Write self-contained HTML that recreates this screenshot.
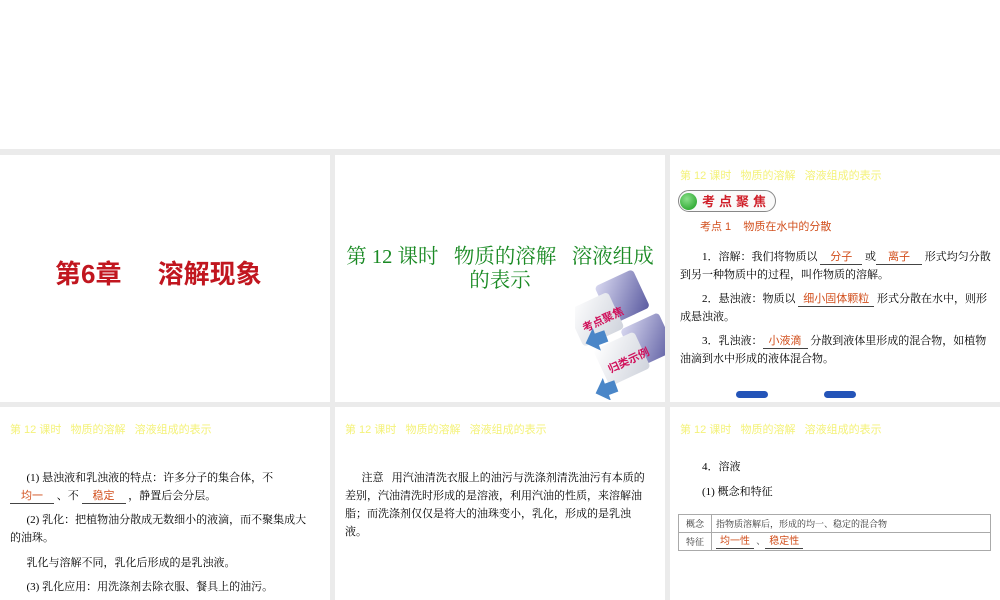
<!DOCTYPE html>
<html><head><meta charset="utf-8"><style>
*{margin:0;padding:0;box-sizing:border-box}
body{width:1000px;height:600px;background:#ebebeb;position:relative;overflow:hidden;font-family:"Liberation Serif","Noto Serif CJK SC",serif;color:#000}
.p{position:absolute;background:#fff;overflow:hidden}
.a{position:absolute;white-space:nowrap}
.hd{position:absolute;left:10px;top:14px;font:11px "Liberation Sans","Noto Sans CJK SC",sans-serif;color:#f4f27a;white-space:nowrap}
.t{font-size:11px;line-height:18px}
.r{color:#d2501e;font-family:"Liberation Sans","Noto Sans CJK SC",sans-serif;font-weight:normal}
.u{display:inline-block;border-bottom:1px solid #444;text-align:center;line-height:13px}
</style></head><body>
<div class="p" style="left:0;top:0;width:1000px;height:149px"></div>

<div class="p" style="left:0;top:155px;width:330px;height:247px">
<div class="a" style="left:55px;top:99px;font:bold 26px 'Liberation Sans','Noto Sans CJK SC',sans-serif;color:#c1161f">第6章&nbsp;&nbsp;&nbsp;&nbsp;&nbsp;溶解现象</div>
</div>

<div class="p" style="left:335px;top:155px;width:330px;height:247px">
<div class="a" style="left:0;top:90px;width:330px;font-size:20.5px;line-height:24px;color:#1a8a24;text-align:center">第 12 课时&nbsp;&nbsp;&nbsp;物质的溶解&nbsp;&nbsp;&nbsp;溶液组成<br>的表示</div>
<svg style="position:absolute;left:240px;top:110px" width="90" height="135">
<defs><linearGradient id="g1" x1="0" y1="0" x2="1" y2="1"><stop offset="0" stop-color="#d8d8f0"/><stop offset="1" stop-color="#5a5aa0"/></linearGradient>
<linearGradient id="g2" x1="0" y1="0" x2="1" y2="1"><stop offset="0" stop-color="#fff"/><stop offset="1" stop-color="#cfd3dc"/></linearGradient></defs>
<g transform="rotate(-25 45 65)">
<rect x="40" y="15" width="42" height="42" rx="4" fill="url(#g1)"/>
<rect x="5" y="25" width="45" height="40" rx="4" fill="url(#g2)"/>
<rect x="45" y="65" width="42" height="42" rx="4" fill="url(#g1)"/>
<rect x="12" y="72" width="45" height="40" rx="4" fill="url(#g2)"/>
<text x="12" y="52" font-size="11" font-weight="bold" fill="#d0105a" font-family="Noto Sans CJK SC">考点聚焦</text>
<text x="18" y="100" font-size="11" font-weight="bold" fill="#d0105a" font-family="Noto Sans CJK SC">归类示例</text>
</g>
<path d="M10 75 l12 -12 l0 6 l10 0 l0 12 l-10 0 l0 6 z" fill="#4a86c8" transform="rotate(-20 20 75)"/>
<path d="M20 125 l12 -12 l0 6 l10 0 l0 12 l-10 0 l0 6 z" fill="#4a86c8" transform="rotate(-20 30 125)"/>
</svg>
</div>

<div class="p" style="left:670px;top:155px;width:330px;height:247px">
<div class="hd" style="top:12px">第 12 课时&nbsp;&nbsp;&nbsp;物质的溶解&nbsp;&nbsp;&nbsp;溶液组成的表示</div>
<div class="a" style="left:8px;top:35px;width:98px;height:22px;border:1px solid #888;border-radius:11px;background:#fafafa"></div>
<div class="a" style="left:10px;top:38px;width:17px;height:17px;border-radius:50%;background:radial-gradient(circle at 40% 35%,#8be08b,#159a1a)"></div>
<div class="a" style="left:32px;top:36px;font:bold 13px 'Liberation Sans','Noto Sans CJK SC',sans-serif;color:#d0202a;letter-spacing:4px">考点聚焦</div>
<div class="a r" style="left:30px;top:63px;font-size:11px">考点 1&nbsp;&nbsp;&nbsp;&nbsp;物质在水中的分散</div>
<div class="a t" style="left:10px;top:93px;width:312px;white-space:normal">&nbsp;&nbsp;&nbsp;&nbsp;&nbsp;&nbsp;&nbsp;&nbsp;1．溶解：我们将物质以 <span class="u r" style="width:42px">分子</span> 或<span class="u r" style="width:46px">离子</span> 形式均匀分散到另一种物质中的过程，叫作物质的溶解。</div>
<div class="a t" style="left:10px;top:135px;width:312px;white-space:normal">&nbsp;&nbsp;&nbsp;&nbsp;&nbsp;&nbsp;&nbsp;&nbsp;2．悬浊液：物质以 <span class="u r" style="width:76px">细小固体颗粒</span> 形式分散在水中，则形成悬浊液。</div>
<div class="a t" style="left:10px;top:177px;width:312px;white-space:normal">&nbsp;&nbsp;&nbsp;&nbsp;&nbsp;&nbsp;&nbsp;&nbsp;3．乳浊液：<span class="u r" style="width:45px">小液滴</span> 分散到液体里形成的混合物，如植物油滴到水中形成的液体混合物。</div>
<div class="a" style="left:66px;top:236px;width:32px;height:7px;border-radius:4px;background:#2454b8"></div>
<div class="a" style="left:154px;top:236px;width:32px;height:7px;border-radius:4px;background:#2454b8"></div>
</div>

<div class="p" style="left:0;top:407px;width:330px;height:193px">
<div class="hd">第 12 课时&nbsp;&nbsp;&nbsp;物质的溶解&nbsp;&nbsp;&nbsp;溶液组成的表示</div>
<div class="a t" style="left:10px;top:62px;width:300px;white-space:normal">&nbsp;&nbsp;&nbsp;&nbsp;&nbsp;&nbsp;(1) 悬浊液和乳浊液的特点：许多分子的集合体，不<br><span class="u r" style="width:44px">均一</span> 、不 <span class="u r" style="width:44px">稳定</span> ，静置后会分层。</div>
<div class="a t" style="left:10px;top:104px;width:300px;white-space:normal">&nbsp;&nbsp;&nbsp;&nbsp;&nbsp;&nbsp;(2) 乳化：把植物油分散成无数细小的液滴，而不聚集成大的油珠。</div>
<div class="a t" style="left:10px;top:147px">&nbsp;&nbsp;&nbsp;&nbsp;&nbsp;&nbsp;乳化与溶解不同，乳化后形成的是乳浊液。</div>
<div class="a t" style="left:10px;top:171px">&nbsp;&nbsp;&nbsp;&nbsp;&nbsp;&nbsp;(3) 乳化应用：用洗涤剂去除衣服、餐具上的油污。</div>
</div>

<div class="p" style="left:335px;top:407px;width:330px;height:193px">
<div class="hd">第 12 课时&nbsp;&nbsp;&nbsp;物质的溶解&nbsp;&nbsp;&nbsp;溶液组成的表示</div>
<div class="a t" style="left:10px;top:62px;width:300px;white-space:normal">&nbsp;&nbsp;&nbsp;&nbsp;&nbsp;&nbsp;注意&nbsp;&nbsp;&nbsp;用汽油清洗衣服上的油污与洗涤剂清洗油污有本质的差别，汽油清洗时形成的是溶液，利用汽油的性质，来溶解油脂；而洗涤剂仅仅是将大的油珠变小，乳化，形成的是乳浊液。</div>
</div>

<div class="p" style="left:670px;top:407px;width:330px;height:193px">
<div class="hd">第 12 课时&nbsp;&nbsp;&nbsp;物质的溶解&nbsp;&nbsp;&nbsp;溶液组成的表示</div>
<div class="a t" style="left:32px;top:51px">4．溶液</div>
<div class="a t" style="left:32px;top:76px">(1) 概念和特征</div>
<table style="position:absolute;left:8px;top:107px;width:313px;border-collapse:collapse;font-size:9px;color:#333">
<tr style="height:18px"><td style="border:1px solid #aaa;width:33px;text-align:center">概念</td><td style="border:1px solid #aaa;padding-left:4px">指物质溶解后，形成的均一、稳定的混合物</td></tr>
<tr style="height:18px"><td style="border:1px solid #aaa;text-align:center">特征</td><td style="border:1px solid #aaa;padding-left:4px"><span class="u r" style="width:38px;font-size:10px">均一性</span> 、<span class="u r" style="width:38px;font-size:10px">稳定性</span></td></tr>
</table>
</div>
</body></html>
